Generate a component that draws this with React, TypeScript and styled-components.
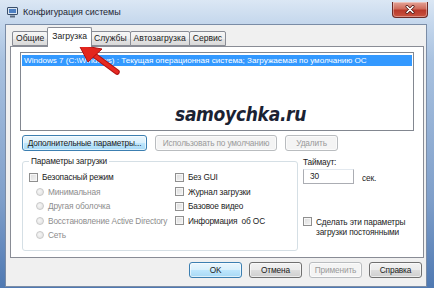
import React from 'react'
import styled, { createGlobalStyle } from 'styled-components'

const GlobalStyle = createGlobalStyle`
  html, body {
    margin: 0;
    padding: 0;
    width: 434px;
    height: 288px;
    overflow: hidden;
    background: #9fb9d8;
  }
  * {
    box-sizing: border-box;
  }
`

const FONT = `'Liberation Sans', 'Noto Sans', sans-serif`

const Window = styled.div`
  position: relative;
  width: 434px;
  height: 288px;
  display: flex;
  flex-direction: column;
  padding: 0 7px 1px 5px;
  font-family: ${FONT};
  font-size: 8.3px;
  letter-spacing: -0.15px;
  color: #1b1b1b;
  background: linear-gradient(
    to bottom,
    #dbe7f4 0px,
    #c6d8ed 22px,
    #a9c2e0 60px,
    #7f9fca 200px,
    #4f79b2 288px
  );
`

const TitleBar = styled.div`
  height: 24px;
  display: flex;
  align-items: flex-start;
  padding-left: 2px;
`

const TitleIcon = styled.svg`
  width: 11px;
  height: 11px;
  margin-top: 7px;
`

const Title = styled.span`
  margin: 7px 0 0 5px;
  font-size: 9px;
  letter-spacing: -0.05px;
  color: #1e2633;
`

const CloseButton = styled.div`
  margin: 2px -1px 0 auto;
  width: 36px;
  height: 16px;
  border: 1px solid #6b2a26;
  border-top: none;
  border-radius: 0 0 4px 4px;
  background: linear-gradient(to bottom, #e4a397 0%, #cf6c5c 45%, #b9392a 55%, #c9533f 100%);
  display: flex;
  align-items: center;
  justify-content: center;
  box-shadow: inset 0 0 0 1px rgba(255, 255, 255, 0.35);
`

const Client = styled.div`
  flex: 1;
  display: flex;
  flex-direction: column;
  background: #f0f0f0;
  border: 1px solid #7a8ca6;
  padding: 2px 2px 0 4px;
`

const TabStrip = styled.div`
  display: flex;
  align-items: flex-end;
  height: 20px;
  padding-left: 2px;
  margin-bottom: -1px;
  position: relative;
  z-index: 1;
`

const Tab = styled.div<{ $active?: boolean }>`
  height: ${(p) => (p.$active ? '20px' : '15px')};
  margin: ${(p) => (p.$active ? '0 -1px' : '0 0 1px -1px')};
  padding: ${(p) => (p.$active ? '3px 4px 0' : '1px 3px 0')};
  border: 1px solid #898c95;
  border-bottom: ${(p) => (p.$active ? 'none' : '1px solid #898c95')};
  border-radius: 2px 2px 0 0;
  background: ${(p) =>
    p.$active ? '#ffffff' : 'linear-gradient(to bottom, #f6f6f6 0%, #eeeeee 50%, #e4e4e4 51%, #dadada 100%)'};
  position: relative;
  z-index: ${(p) => (p.$active ? 2 : 1)};
  white-space: nowrap;
  line-height: 11px;
  font-size: 8.6px;
  letter-spacing: 0;

  &:first-child {
    margin-left: 0;
  }
`

const TabPanel = styled.div`
  height: 212px;
  background: #ffffff;
  border: 1px solid #898c95;
  padding: 5px 9px 0 9px;
  display: flex;
  flex-direction: column;
`

const ListBox = styled.div`
  position: relative;
  height: 79px;
  border: 1px solid #828790;
  padding: 2px 1px;
  background: #ffffff;
  overflow: hidden;
`

const SelectedRow = styled.div`
  height: 11px;
  line-height: 11px;
  padding-left: 2px;
  background: #3399ff;
  color: #ffffff;
  font-size: 8.1px;
  letter-spacing: 0;
  white-space: nowrap;
  overflow: hidden;
`

const Watermark = styled.div`
  position: absolute;
  left: 154px;
  top: 50px;
  font-family: 'DejaVu Sans Condensed', 'DejaVu Sans', sans-serif;
  font-stretch: condensed;
  font-size: 19px;
  font-weight: bold;
  font-style: italic;
  line-height: 22px;
  color: #1a2233;
  letter-spacing: -0.3px;
`

const ButtonRow = styled.div`
  display: flex;
  gap: 8px;
  margin: 4px 0 0 2px;
`

const Button = styled.div<{ $w: number; $focused?: boolean; $disabled?: boolean }>`
  width: ${(p) => p.$w}px;
  height: 16px;
  display: flex;
  align-items: center;
  justify-content: center;
  border-radius: 3px;
  white-space: nowrap;
  border: 1px solid
    ${(p) => (p.$focused ? '#3c7fb1' : p.$disabled ? '#b9bcbf' : '#707070')};
  color: ${(p) => (p.$disabled ? '#9a9a9a' : '#1b1b1b')};
  background: ${(p) =>
    p.$disabled
      ? '#f4f4f4'
      : p.$focused
        ? 'linear-gradient(to bottom, #eaf6fd 0%, #d9f0fc 50%, #bee6fd 51%, #a7d9f5 100%)'
        : 'linear-gradient(to bottom, #f2f2f2 0%, #ebebeb 50%, #dddddd 51%, #cfcfcf 100%)'};
  box-shadow: inset 0 0 0 1px rgba(255, 255, 255, 0.6);
`

const Lower = styled.div`
  display: flex;
  margin-top: 5px;
`

const GroupBox = styled.fieldset`
  width: 276px;
  height: 95px;
  margin: 0 0 0 2px;
  padding: 3px 6px 0 6px;
  border: 1px solid #d5dfe5;
  border-radius: 3px;
  display: grid;
  grid-template-columns: 146px 1fr;
  grid-template-rows: repeat(5, 14.5px);
  grid-auto-flow: column;
  align-content: start;
`

const Legend = styled.legend`
  padding: 0 2px;
  margin-left: 0;
  line-height: 11px;
`

const Option = styled.div<{ $indent?: boolean; $disabled?: boolean }>`
  display: flex;
  align-items: center;
  gap: 4px;
  padding-left: ${(p) => (p.$indent ? '7px' : '0')};
  color: ${(p) => (p.$disabled ? '#8d8d8d' : '#1b1b1b')};
  white-space: nowrap;
`

const CheckBox = styled.span`
  flex: none;
  width: 9px;
  height: 9px;
  border: 1px solid #8f8f8f;
  background: linear-gradient(135deg, #dcdcdc 0%, #f4f4f4 100%);
  box-shadow: inset 0 0 0 1px #f6f6f6;
`

const Radio = styled.span`
  flex: none;
  width: 8px;
  height: 8px;
  border-radius: 50%;
  border: 1px solid #c9c9c9;
  background: radial-gradient(circle at 40% 40%, #f6f6f6 0%, #dedede 100%);
`

const SideColumn = styled.div`
  flex: 1;
  display: flex;
  flex-direction: column;
  padding: 0 0 0 5px;
`

const FieldLabel = styled.div`
  line-height: 11px;
  margin-top: 1px;
`

const TimeoutRow = styled.div`
  display: flex;
  align-items: center;
  gap: 8px;
  margin-top: 1px;
`

const Input = styled.div`
  width: 51px;
  height: 15px;
  border: 1px solid #abadb3;
  border-top-color: #e3e9ef;
  background: #ffffff;
  padding-left: 6px;
  line-height: 13px;
`

const Unit = styled.span`
  margin-top: 2px;
`

const PersistOption = styled.div`
  display: flex;
  align-items: flex-start;
  gap: 4px;
  margin-top: 33px;
  line-height: 10px;
`

const Footer = styled.div`
  display: flex;
  justify-content: flex-end;
  gap: 7px;
  padding: 4px 2px 0 0;
`

const Arrow = styled.svg`
  position: absolute;
  left: 74px;
  top: 40px;
  width: 50px;
  height: 38px;
  pointer-events: none;
`

const App = () => {
  return (
    <>
      <GlobalStyle />
      <Window>
        <TitleBar>
          <TitleIcon viewBox="0 0 11 11">
            <rect x="0.5" y="0.5" width="10" height="7" rx="0.5" fill="#d8e4f0" stroke="#3a4f6b" />
            <rect x="2" y="2" width="7" height="4" fill="#4d7fc2" />
            <rect x="3" y="8.5" width="5" height="2" fill="#5a6a80" />
          </TitleIcon>
          <Title>Конфигурация системы</Title>
          <CloseButton>
            <svg width="10" height="9" viewBox="0 0 10 9">
              <path d="M2 1.5 L8 7.5 M8 1.5 L2 7.5" stroke="#4a1410" strokeWidth="3" strokeLinecap="round" />
              <path d="M2 1.5 L8 7.5 M8 1.5 L2 7.5" stroke="#ffffff" strokeWidth="1.6" strokeLinecap="round" />
            </svg>
          </CloseButton>
        </TitleBar>

        <Client>
          <TabStrip>
            <Tab>Общие</Tab>
            <Tab $active>Загрузка</Tab>
            <Tab>Службы</Tab>
            <Tab>Автозагрузка</Tab>
            <Tab>Сервис</Tab>
          </TabStrip>

          <TabPanel>
            <ListBox>
              <SelectedRow>
                Windows 7 (C:\Windows) : Текущая операционная система; Загружаемая по умолчанию ОС
              </SelectedRow>
              <Watermark>samoychka.ru</Watermark>
            </ListBox>

            <ButtonRow>
              <Button $w={125} $focused>
                Дополнительные параметры...
              </Button>
              <Button $w={122} $disabled>
                Использовать по умолчанию
              </Button>
              <Button $w={53} $disabled>
                Удалить
              </Button>
            </ButtonRow>

            <Lower>
              <GroupBox>
                <Legend>Параметры загрузки</Legend>
                <Option>
                  <CheckBox />
                  Безопасный режим
                </Option>
                <Option $indent $disabled>
                  <Radio />
                  Минимальная
                </Option>
                <Option $indent $disabled>
                  <Radio />
                  Другая оболочка
                </Option>
                <Option $indent $disabled>
                  <Radio />
                  Восстановление Active Directory
                </Option>
                <Option $indent $disabled>
                  <Radio />
                  Сеть
                </Option>
                <Option>
                  <CheckBox />
                  Без GUI
                </Option>
                <Option>
                  <CheckBox />
                  Журнал загрузки
                </Option>
                <Option>
                  <CheckBox />
                  Базовое видео
                </Option>
                <Option>
                  <CheckBox />
                  Информация&nbsp; об ОС
                </Option>
              </GroupBox>

              <SideColumn>
                <FieldLabel>Таймаут:</FieldLabel>
                <TimeoutRow>
                  <Input>30</Input>
                  <Unit>сек.</Unit>
                </TimeoutRow>
                <PersistOption>
                  <CheckBox />
                  <span>
                    Сделать эти параметры
                    <br />
                    загрузки постоянными
                  </span>
                </PersistOption>
              </SideColumn>
            </Lower>
          </TabPanel>

          <Footer>
            <Button $w={53} $focused>
              OK
            </Button>
            <Button $w={53}>Отмена</Button>
            <Button $w={53} $disabled>
              Применить
            </Button>
            <Button $w={53}>Справка</Button>
          </Footer>
        </Client>

        <Arrow viewBox="0 0 50 38">
          <path d="M43 32 L20 15" stroke="#b01010" strokeWidth="5.5" strokeLinecap="round" />
          <path d="M43 32 L20 15" stroke="#e62a22" strokeWidth="3.5" strokeLinecap="round" />
          <path d="M5 5 L28 9 L14 22 Z" fill="#e3261e" stroke="#b01010" strokeWidth="1" strokeLinejoin="round" />
        </Arrow>
      </Window>
    </>
  )
}

export default App
